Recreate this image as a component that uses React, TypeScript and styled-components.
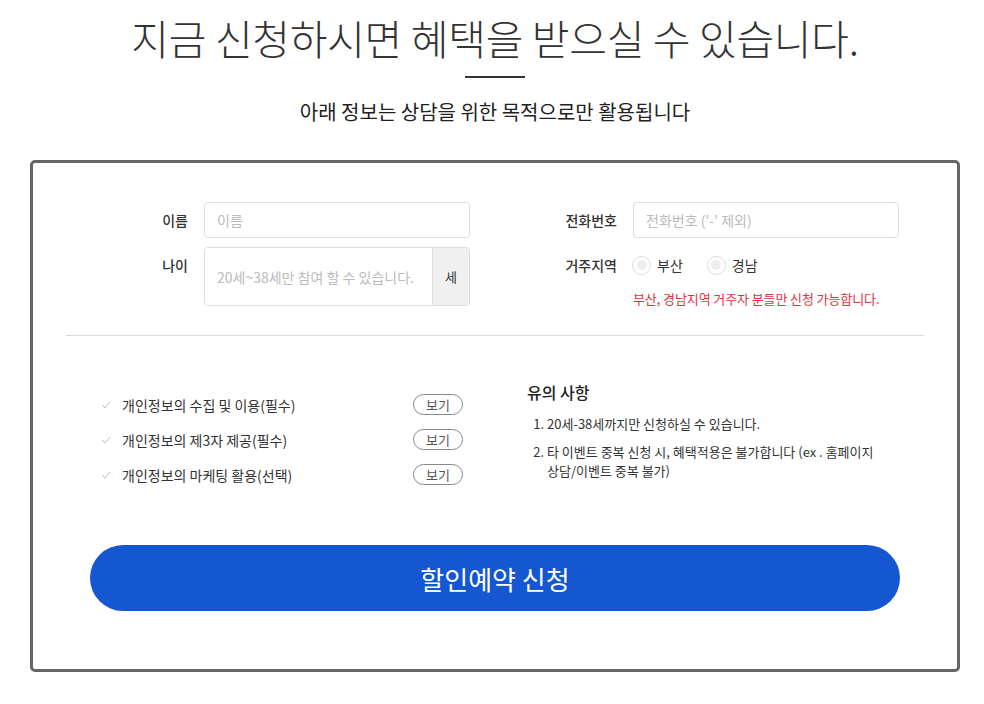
import React from "react";
import styled, { createGlobalStyle } from "styled-components";

const GlobalStyle = createGlobalStyle`
  html, body { margin: 0; padding: 0; background: #fff; }
  body {
    font-family: "Noto Sans CJK KR", "Noto Sans", sans-serif;
    color: #333;
  }
  * { box-sizing: border-box; }
`;

const Page = styled.div`
  margin: 0 24px 0 30px;
  padding-top: 11px;
`;

const Header = styled.header`
  text-align: center;
`;

const Title = styled.h1`
  margin: 0;
  font-size: 41px;
  font-weight: 300;
  line-height: 52px;
  letter-spacing: -0.3px;
  color: #333;
`;

const TitleBar = styled.div`
  width: 60px;
  height: 2px;
  background: #333;
  margin: 13px auto 0;
`;

const Subtitle = styled.p`
  margin: 21px 0 0;
  font-size: 20px;
  line-height: 26px;
  color: #222;
`;

const Card = styled.section`
  margin-top: 35px;
  border: 3px solid #666;
  border-radius: 5px;
  padding: 39px 33px 58px;
`;

const FormGrid = styled.div`
  display: grid;
  grid-template-columns: 1fr 1fr;
`;

const FieldGroup = styled.div`
  display: grid;
  grid-template-columns: 122px 266px;
  column-gap: 16px;
  row-gap: 9px;
  align-content: start;
`;

const Label = styled.label`
  text-align: right;
  font-size: 14px;
  font-weight: 500;
  line-height: 36px;
  height: 36px;
  color: #333;
`;

const Input = styled.input`
  width: 100%;
  height: 36px;
  border: 1px solid #ddd;
  border-radius: 4px;
  padding: 0 12px;
  font-family: inherit;
  font-size: 14px;
  color: #333;
  outline: none;
  &::placeholder { color: #bbb; }
`;

const AgeGroup = styled.div`
  display: flex;
  height: 59px;
  border: 1px solid #ddd;
  border-radius: 4px;
  overflow: hidden;
`;

const AgeInput = styled.input`
  flex: 1;
  min-width: 0;
  border: none;
  padding: 0 12px;
  font-family: inherit;
  font-size: 14px;
  outline: none;
  &::placeholder { color: #bbb; }
`;

const Addon = styled.span`
  width: 37px;
  display: flex;
  align-items: center;
  justify-content: center;
  background: #f0f0f0;
  border-left: 1px solid #ddd;
  font-size: 13px;
  color: #333;
`;

const RegionBox = styled.div`
  display: flex;
  flex-direction: column;
`;

const RadioRow = styled.div`
  display: flex;
  align-items: center;
  height: 36px;
  margin-left: -1px;
  gap: 24px;
`;

const RadioLabel = styled.label`
  display: flex;
  align-items: center;
  gap: 6px;
  font-size: 14px;
  color: #333;
`;

const RadioDot = styled.span`
  width: 19px;
  height: 19px;
  border-radius: 50%;
  border: 1px solid #ddd;
  display: flex;
  align-items: center;
  justify-content: center;
  &::after {
    content: "";
    width: 10px;
    height: 10px;
    border-radius: 50%;
    background: #eee;
  }
`;

const Note = styled.p`
  margin: 6px 0 0;
  font-size: 13px;
  line-height: 20px;
  color: #e03340;
  letter-spacing: -0.1px;
  white-space: nowrap;
`;

const Divider = styled.hr`
  border: none;
  height: 1px;
  background: #ddd;
  margin: 26px 0 0;
`;

const Bottom = styled.div`
  display: grid;
  grid-template-columns: 461px 1fr;
  margin-top: 44px;
`;

const AgreeList = styled.ul`
  list-style: none;
  margin: 0;
  padding: 7px 0 0 35px;
  width: 397px;
`;

const AgreeRow = styled.li`
  display: flex;
  align-items: center;
  height: 35px;
`;

const Check = styled.svg`
  width: 10px;
  height: 8px;
  margin-right: 11px;
  flex: none;
`;

const AgreeText = styled.span`
  flex: 1;
  font-size: 14px;
  color: #333;
`;

const ViewButton = styled.button`
  width: 50px;
  height: 21px;
  border: 1px solid #888;
  border-radius: 11px;
  background: #fff;
  font-family: inherit;
  font-size: 13px;
  line-height: 19px;
  padding: 0;
  color: #555;
`;

const Notice = styled.div``;

const NoticeTitle = styled.h3`
  margin: 0;
  font-size: 16px;
  font-weight: 500;
  line-height: 24px;
  color: #222;
`;

const NoticeList = styled.ol`
  margin: 10px 0 0;
  padding-left: 20px;
  font-size: 13px;
  line-height: 19px;
  color: #333;
  width: 365px;
  word-break: keep-all;
  li + li { margin-top: 9px; }
`;

const SubmitButton = styled.button`
  display: block;
  width: 810px;
  height: 66px;
  margin: 53px auto 0;
  border: none;
  border-radius: 33px;
  background: #1557d0;
  color: #fff;
  font-family: inherit;
  font-size: 26px;
`;

const agreements = [
  "개인정보의 수집 및 이용(필수)",
  "개인정보의 제3자 제공(필수)",
  "개인정보의 마케팅 활용(선택)",
];

export default function App() {
  return (
    <>
      <GlobalStyle />
      <Page>
        <Header>
          <Title>지금 신청하시면 혜택을 받으실 수 있습니다.</Title>
          <TitleBar />
          <Subtitle>아래 정보는 상담을 위한 목적으로만 활용됩니다</Subtitle>
        </Header>
        <Card>
          <FormGrid>
            <FieldGroup>
              <Label>이름</Label>
              <Input placeholder="이름" />
              <Label>나이</Label>
              <AgeGroup>
                <AgeInput placeholder="20세~38세만 참여 할 수 있습니다." />
                <Addon>세</Addon>
              </AgeGroup>
            </FieldGroup>
            <FieldGroup>
              <Label>전화번호</Label>
              <Input placeholder="전화번호 ('-' 제외)" />
              <Label>거주지역</Label>
              <RegionBox>
                <RadioRow>
                  <RadioLabel>
                    <RadioDot />
                    부산
                  </RadioLabel>
                  <RadioLabel>
                    <RadioDot />
                    경남
                  </RadioLabel>
                </RadioRow>
                <Note>부산, 경남지역 거주자 분들만 신청 가능합니다.</Note>
              </RegionBox>
            </FieldGroup>
          </FormGrid>
          <Divider />
          <Bottom>
            <AgreeList>
              {agreements.map((a) => (
                <AgreeRow key={a}>
                  <Check viewBox="0 0 10 8">
                    <polyline points="1,4 4,7 9,1" fill="none" stroke="#bbb" strokeWidth="1" />
                  </Check>
                  <AgreeText>{a}</AgreeText>
                  <ViewButton>보기</ViewButton>
                </AgreeRow>
              ))}
            </AgreeList>
            <Notice>
              <NoticeTitle>유의 사항</NoticeTitle>
              <NoticeList>
                <li>20세-38세까지만 신청하실 수 있습니다.</li>
                <li>타 이벤트 중복 신청 시, 혜택적용은 불가합니다 (ex . 홈페이지 상담/이벤트 중복 불가)</li>
              </NoticeList>
            </Notice>
          </Bottom>
          <SubmitButton>할인예약 신청</SubmitButton>
        </Card>
      </Page>
    </>
  );
}
